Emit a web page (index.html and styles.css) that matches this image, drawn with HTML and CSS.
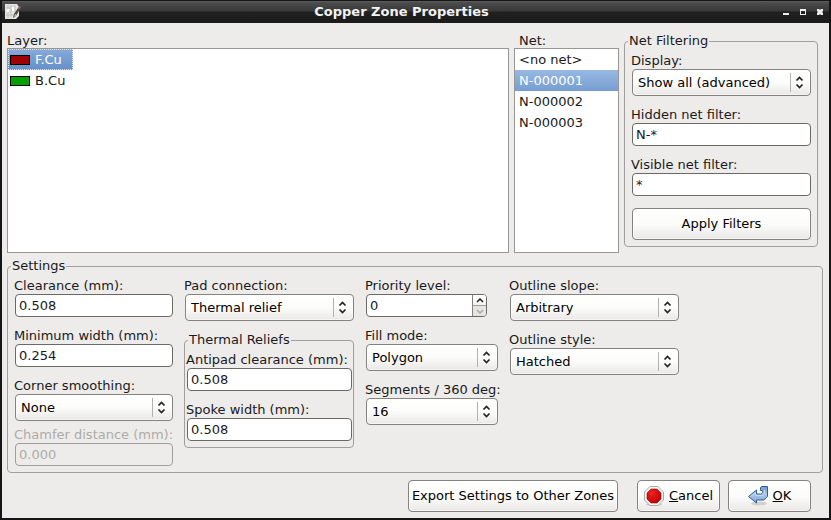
FILE: index.html
```html
<!DOCTYPE html>
<html lang="en">
<head>
<meta charset="utf-8">
<title>Copper Zone Properties</title>
<link rel="stylesheet" href="styles.css">
</head>
<body>
<svg class="defs" aria-hidden="true">
  <symbol id="updown" viewBox="0 0 21 19">
    <path d="M.5 0v19" fill="none" stroke="#b4b2b0"/>
    <path d="M6.500 7.500L9.500 4.500L12.500 7.500M6.500 11.500L9.500 14.500L12.500 11.500" fill="none" stroke="#222" stroke-width="1.700"/>
  </symbol>
</svg>
<div class="window">
  <header class="titlebar">
    <svg class="app-icon" width="16" height="16" viewBox="0 0 16 16" aria-hidden="true">
      <path d="M0 0h12l2 3v9l-3 3H0z" fill="#e4e4e2"/>
      <path d="M3 1v13M6 1v12M1 4h5M2 8h4M8 2v4H6M10 1v7M1 11h9" fill="none" stroke="#c2c1be"/>
      <path d="M7 3h2v4H7zM2 5h2v3H2z" fill="#fff"/>
      <path d="M8 14l1-4 4-6 2 1-4 7z" fill="#4b4b45"/>
      <path d="M9 13l1-3 2 1z" fill="#d8cf72"/>
      <path d="M13 4l1-2 2 1-1 2z" fill="#a05c68"/>
    </svg>
    <h1>Copper Zone Properties</h1>
    <div class="window-buttons">
      <button aria-label="Minimize"><svg width="8" height="8" viewBox="0 0 8 8"><path d="M1 5h6v2H1z" fill="#eee"/></svg></button>
      <button aria-label="Maximize"><svg width="8" height="8" viewBox="0 0 8 8"><path d="M1 1h6v6H1zM2 3v3h4V3z" fill="#eee" fill-rule="evenodd"/></svg></button>
      <button aria-label="Close"><svg width="8" height="8" viewBox="0 0 8 8"><path d="M1 1h2l1 1 1-1h2v2L6 4l1 1v2H5L4 6 3 7H1V5l1-1-1-1z" fill="#eee"/></svg></button>
    </div>
  </header>
  <form class="dialog">
    <div class="top">
      <div class="pane pane-layer">
        <span class="caption" id="layer-label">Layer:</span>
        <div class="list" role="radiogroup" aria-labelledby="layer-label">
          <label class="layer"><input type="radio" name="layer" checked><span class="swatch front"></span>F.Cu</label>
          <label class="layer"><input type="radio" name="layer"><span class="swatch back"></span>B.Cu</label>
        </div>
      </div>
      <div class="pane pane-net">
        <label class="caption" for="net">Net:</label>
        <select class="list nets" id="net" size="4">
          <option>&lt;no net&gt;</option>
          <option selected>N-000001</option>
          <option>N-000002</option>
          <option>N-000003</option>
        </select>
      </div>
      <fieldset class="filtering">
        <legend>Net Filtering</legend>
        <div class="column">
          <div class="field">
            <label for="display">Display:</label>
            <span class="choice"><select id="display"><option>Show all (advanced)</option></select><svg><use href="#updown"/></svg></span>
          </div>
          <div class="field">
            <label for="hidden-filter">Hidden net filter:</label>
            <input type="text" id="hidden-filter" value="N-*">
          </div>
          <div class="field">
            <label for="visible-filter">Visible net filter:</label>
            <input type="text" id="visible-filter" value="*">
          </div>
        </div>
        <button type="button" class="button apply">Apply Filters</button>
      </fieldset>
    </div>
    <fieldset class="settings">
      <legend>Settings</legend>
      <div class="columns">
        <div class="column">
          <div class="field">
            <label for="clearance">Clearance (mm):</label>
            <input type="text" id="clearance" value="0.508">
          </div>
          <div class="field">
            <label for="min-width">Minimum width (mm):</label>
            <input type="text" id="min-width" value="0.254">
          </div>
          <div class="pair">
            <div class="field">
              <label for="smoothing">Corner smoothing:</label>
              <span class="choice"><select id="smoothing"><option>None</option></select><svg><use href="#updown"/></svg></span>
            </div>
            <div class="field disabled">
              <label for="chamfer">Chamfer distance (mm):</label>
              <input type="text" id="chamfer" value="0.000" disabled>
            </div>
          </div>
        </div>
        <div class="column">
          <div class="field">
            <label for="pad">Pad connection:</label>
            <span class="choice"><select id="pad"><option>Thermal relief</option></select><svg><use href="#updown"/></svg></span>
          </div>
          <fieldset class="thermal">
            <legend>Thermal Reliefs</legend>
            <div class="column">
              <div class="field">
                <label for="antipad">Antipad clearance (mm):</label>
                <input type="text" id="antipad" value="0.508">
              </div>
              <div class="field">
                <label for="spoke">Spoke width (mm):</label>
                <input type="text" id="spoke" value="0.508">
              </div>
            </div>
          </fieldset>
        </div>
        <div class="column">
          <div class="field">
            <label for="priority">Priority level:</label>
            <span class="spin">
              <input type="number" id="priority" value="0" min="0">
              <span class="steppers">
                <button type="button" aria-label="Increase"><svg width="8" height="5" viewBox="0 0 8 5"><path d="M1 4L4 1L7 4" fill="none" stroke="#222" stroke-width="1.500"/></svg></button>
                <button type="button" aria-label="Decrease" disabled><svg width="8" height="5" viewBox="0 0 8 5"><path d="M1 1L4 4L7 1" fill="none" stroke="#aaa" stroke-width="1.500"/></svg></button>
              </span>
            </span>
          </div>
          <div class="field">
            <label for="fill">Fill mode:</label>
            <span class="choice"><select id="fill"><option>Polygon</option></select><svg><use href="#updown"/></svg></span>
          </div>
          <div class="field">
            <label for="segments">Segments / 360 deg:</label>
            <span class="choice"><select id="segments"><option>16</option></select><svg><use href="#updown"/></svg></span>
          </div>
        </div>
        <div class="column">
          <div class="field">
            <label for="slope">Outline slope:</label>
            <span class="choice"><select id="slope"><option>Arbitrary</option></select><svg><use href="#updown"/></svg></span>
          </div>
          <div class="field">
            <label for="style">Outline style:</label>
            <span class="choice"><select id="style"><option>Hatched</option></select><svg><use href="#updown"/></svg></span>
          </div>
        </div>
      </div>
    </fieldset>
    <div class="actions">
      <button type="button" class="button export">Export Settings to Other Zones</button>
      <div class="confirm">
        <button type="button" class="button">
          <svg width="20" height="20" viewBox="0 0 20 20" aria-hidden="true">
            <defs><radialGradient id="red" cx=".35" cy=".3" r=".8"><stop offset="0" stop-color="#ee2222"/><stop offset="1" stop-color="#bd0000"/></radialGradient></defs>
            <ellipse cx="10" cy="18.500" rx="8" ry="1.500" fill="#c8c8c6"/>
            <path d="M6 .5h8L19.500 6v8L14 19.500H6L.5 14V6z" fill="#f4f4f2" stroke="#a9aba6"/>
            <path d="M7 3h6l4 4v6l-4 4H7l-4-4V7z" fill="url(#red)" stroke="#a40000" stroke-width=".6"/>
          </svg>
          <span><u>C</u>ancel</span>
        </button>
        <button type="button" class="button">
          <svg width="20" height="20" viewBox="0 0 20 20" aria-hidden="true">
            <defs><linearGradient id="blue" x2="0" y2="1"><stop offset="0" stop-color="#6d98ca"/><stop offset=".5" stop-color="#a9c6e6"/><stop offset="1" stop-color="#7fa6d4"/></linearGradient></defs>
            <ellipse cx="11" cy="17.500" rx="8" ry="2" fill="#d2d1cf"/>
            <path d="M12.500 1.500l1-1h6v10l-3.500 3.500H8.500v3L.5 10.500l8-6.500v4h4c1.500 0 2-1 2-2.500V4.500h-2z" fill="url(#blue)" stroke="#345f97" stroke-linejoin="round"/>
            <path d="M2.500 10.500l5-4v3h6c2 0 3-1.500 3-3.500V4" fill="none" stroke="#c5d9ef" stroke-width="1"/>
          </svg>
          <span><u>O</u>K</span>
        </button>
      </div>
    </div>
  </form>
</div>
</body>
</html>
```

FILE: styles.css
```css
* { box-sizing: border-box; }

body {
  margin: 0;
  background: #151517;
  color: #1a1a1a;
  font: 13px/16px "DejaVu Sans", sans-serif;
}

input, select, button {
  margin: 0;
  color: inherit;
  font: inherit;
  outline: 0;
}

fieldset {
  min-width: 0;
  margin: 0;
  padding: 4px 6px 6px;
  border: 1px solid #a19f9d;
  border-radius: 4px;
}

legend {
  margin-left: -3px;
  padding: 0 1px;
}

.defs { position: absolute; width: 0; height: 0; }

.window {
  display: flex;
  flex-direction: column;
  min-height: 100vh;
  padding: 0 2px 2px;
}

/* Title bar */
.titlebar {
  display: flex;
  align-items: center;
  height: 23px;
  padding: 0 5px 0 3px;
  border-top: 1px solid #151517;
  background: linear-gradient(#666 0, #4e4e4e 1px, #383838 10px, #202020 11px, #1b1b1b 100%);
}

.titlebar h1 {
  flex: 1;
  margin: 0;
  color: #f2f2f2;
  font-size: 13px;
  line-height: 16px;
  text-align: center;
}

.window-buttons { display: flex; gap: 9px; }

.window-buttons button {
  display: flex;
  padding: 0;
  border: 0;
  background: none;
}

/* Dialog body */
.dialog {
  flex: 1;
  padding: 10px 6px 6px 5px;
  background: #edeceb;
}

.top {
  display: flex;
  gap: 5px;
  padding-right: 5px;
}

.pane { display: flex; flex-direction: column; }
.pane-layer { flex: 1; }
.pane-net { width: 105px; }

.caption { line-height: 15px; }
.pane-net .caption { padding-left: 5px; }

.list {
  flex: 1;
  border: 1px solid #999795;
  background: #fff;
}

.layer {
  display: flex;
  align-items: center;
  width: 65px;
  height: 21px;
  padding-left: 1px;
  border: 1px dotted transparent;
}

.layer input { position: absolute; appearance: none; }

.layer:has(:checked) {
  border-color: #dce8f5;
  background: linear-gradient(#86aadb, #6590c7) border-box;
  color: #fff;
}

.swatch {
  width: 20px;
  height: 10px;
  margin-right: 5px;
  border: 1px solid #000;
}

.front { background: #a00000; }
.back { background: #00a000; }

.nets {
  width: 100%;
  padding: 0;
  border-radius: 0;
  overflow: hidden;
}

.nets option {
  min-height: 21px;
  padding: 3px 4px 2px;
}

.nets option:checked {
  background: linear-gradient(#98b8e2, #769ed1);
  color: #fff;
}

.filtering { width: 194px; margin-bottom: 6px; }

/* Form fields */
.column { display: flex; flex-direction: column; gap: 11px; }
.pair { display: flex; flex-direction: column; gap: 6px; }
.field { display: flex; flex-direction: column; }
.field label { white-space: nowrap; }

.field > input, .choice, .spin { margin-left: 1px; }

input[type="text"] {
  min-width: 0;
  height: 23px;
  padding: 0 4px 0 3px;
  border: 1px solid #6b6966;
  border-radius: 4px;
  background: #fff;
}

.disabled { color: #adaba9; }

.disabled input:disabled {
  border-color: #a19f9d;
  background: #edeceb;
}

.choice {
  display: grid;
  align-items: center;
}

.choice select, .choice svg { grid-area: 1 / 1; }

.choice select {
  width: 100%;
  height: 27px;
  padding: 0 22px 0 5px;
  appearance: none;
}

.choice select, .button {
  border: 1px solid #85837f;
  border-radius: 4px;
  background: linear-gradient(#fff, #fcfcfb 50%, #e9e8e7);
  box-shadow: inset 0 0 0 1px #fff8;
  color: #000;
}

.choice svg {
  justify-self: end;
  width: 21px;
  height: 19px;
  pointer-events: none;
}

.spin {
  display: flex;
  width: 121px;
  height: 23px;
  border: 1px solid #6b6966;
  border-radius: 4px;
  background: #fff;
  overflow: hidden;
}

.spin input {
  flex: 1;
  min-width: 0;
  padding: 0 3px;
  border: 0;
  background: none;
  appearance: textfield;
}

.steppers {
  display: flex;
  flex-direction: column;
  width: 14px;
  border-left: 1px solid #85837f;
}

.steppers button {
  display: flex;
  flex: 1;
  align-items: center;
  justify-content: center;
  padding: 0;
  border: 0;
  background: linear-gradient(#fff, #f3f2f1);
}

.steppers button + button {
  border-top: 1px solid #a19f9d;
  background: #e6e5e3;
}

/* Settings */
.settings { margin-top: 5px; }

.columns {
  display: grid;
  grid-template-columns: 159px 170px 133px 170px;
  gap: 11px;
  align-items: start;
}

.thermal { padding: 4px 1px 6px; }
.thermal legend { margin-left: 2px; }

/* Buttons */
.button {
  display: flex;
  align-items: center;
  justify-content: center;
  gap: 5px;
  height: 32px;
  padding: 0;
}

.apply {
  width: calc(100% - 1px);
  margin: 12px 0 0 1px;
}

.actions {
  display: flex;
  justify-content: flex-end;
  gap: 19px;
  padding: 7px 12px 0 0;
}

.confirm { display: flex; gap: 8px; }
.confirm .button { width: 83px; }
.export { width: 210px; }
```
